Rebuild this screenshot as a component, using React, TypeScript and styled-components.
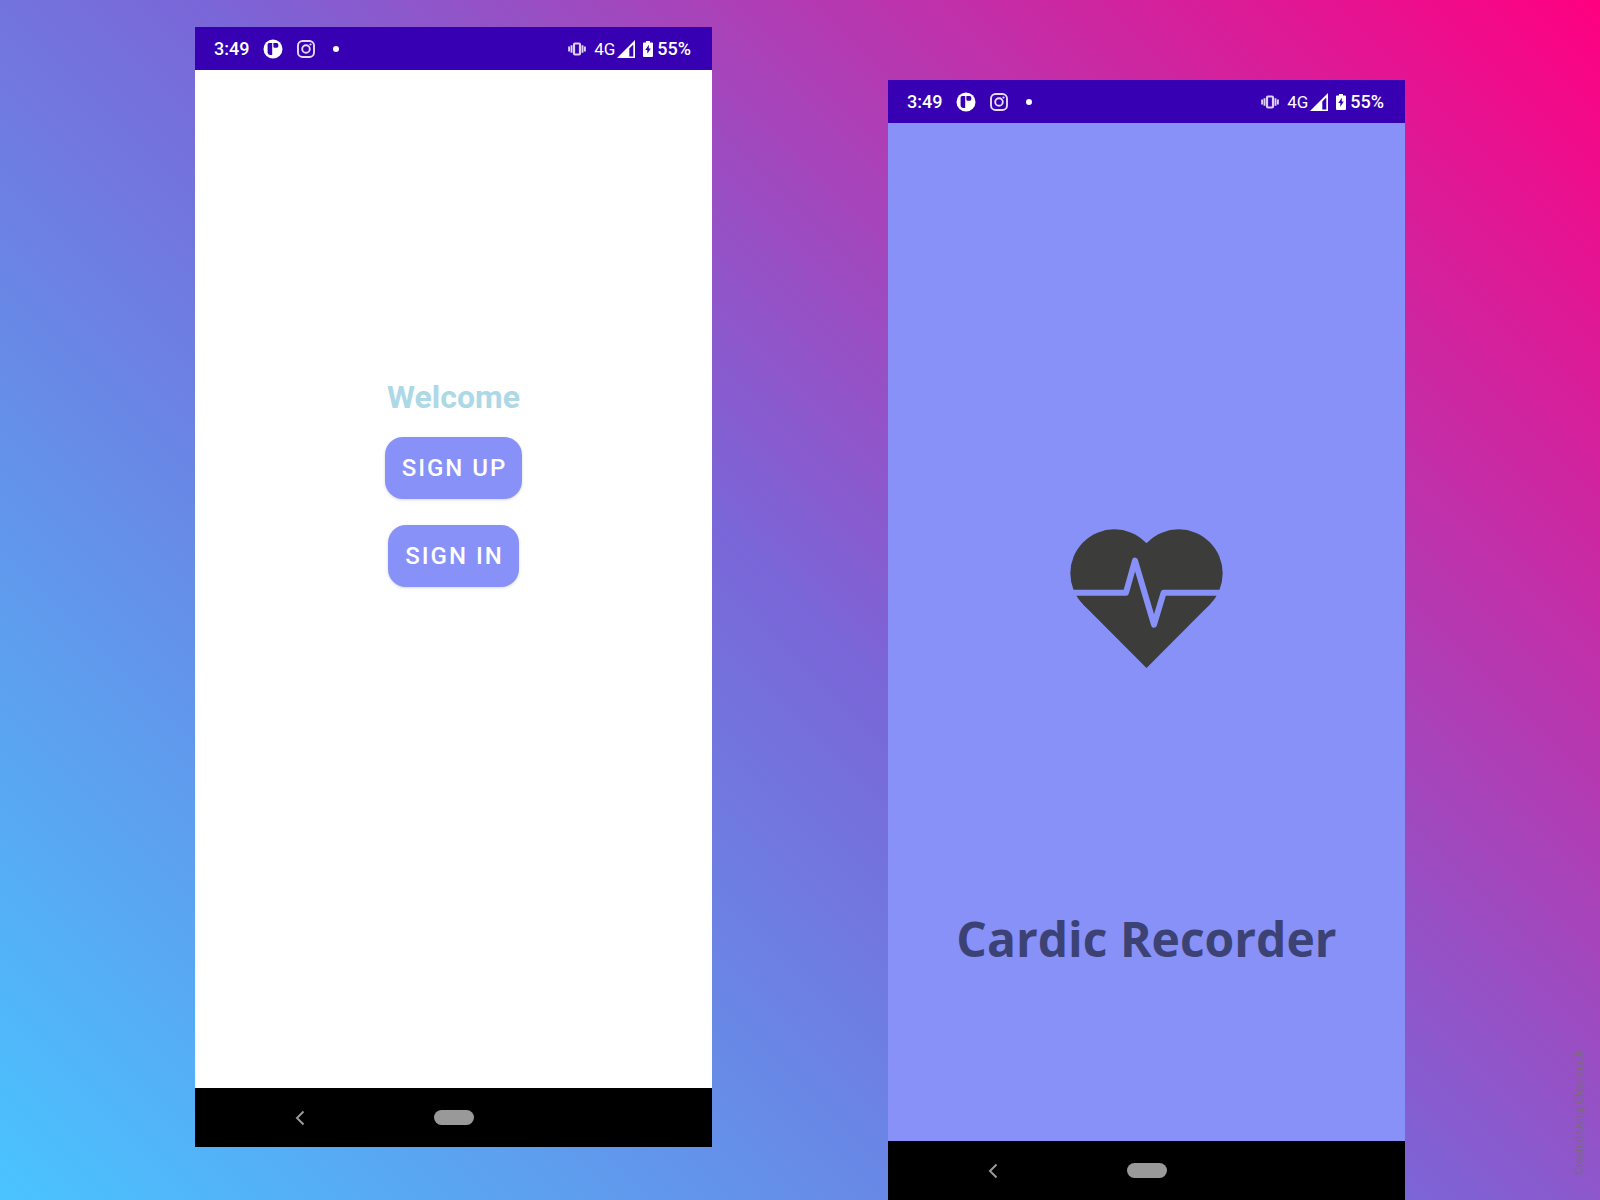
import React from "react";
import styled, { createGlobalStyle } from "styled-components";

const GlobalStyle = createGlobalStyle`
  *, *::before, *::after { box-sizing: border-box; }
  body { margin: 0; font-family: Roboto, "Liberation Sans", sans-serif; }
`;

const Page = styled.main`
  position: relative;
  display: grid;
  grid-template-columns: 1fr 1fr;
  column-gap: 176px;
  min-height: 100vh;
  padding: 0 195px;
  background: linear-gradient(45deg, #4ac4ff 0%, #7a66d8 50%, #ff0080 100%);
`;

const Phone = styled.section<{ $lowered?: boolean }>`
  display: flex;
  flex-direction: column;
  margin: ${(p) => (p.$lowered ? "80px 0 0" : "27px 0 53px")};
`;

const StatusBar = styled.header`
  display: flex;
  align-items: center;
  justify-content: space-between;
  height: 43px;
  padding: 0 21px 0 19px;
  background: #3700b3;
  color: #ffffff;
`;

const StatusGroup = styled.div<{ $gap: number }>`
  display: flex;
  align-items: center;
  gap: ${(p) => p.$gap}px;
`;

const StatusText = styled.span<{ $light?: boolean }>`
  font-size: ${(p) => (p.$light ? 17 : 18)}px;
  line-height: 24px;
  font-weight: ${(p) => (p.$light ? 400 : 500)};
`;

const Dot = styled.span`
  width: 6px;
  height: 6px;
  margin-left: 4px;
  border-radius: 50%;
  background: #ffffff;
`;

const Screen = styled.div<{ $tone: string; $top: number }>`
  flex: 1;
  display: flex;
  flex-direction: column;
  align-items: center;
  padding-top: ${(p) => p.$top}px;
  background: ${(p) => p.$tone};
`;

const Welcome = styled.h1`
  margin: 0 0 20px;
  color: #add8e6;
  font-size: 32px;
  line-height: 40px;
  font-weight: 700;
`;

const ActionButton = styled.button`
  height: 62px;
  margin-bottom: 26px;
  padding: 0 15px 0 17px;
  border: 0;
  border-radius: 18px;
  background: #8791f7;
  box-shadow: 0 1px 3px rgba(0, 0, 0, 0.16);
  color: #ffffff;
  font-family: inherit;
  font-size: 24px;
  line-height: 32px;
  font-weight: 500;
  letter-spacing: 2px;
`;

const AppTitle = styled.h1`
  margin: 238px 0 0;
  color: #3c4274;
  font-family: "Open Sans", sans-serif;
  font-size: 48px;
  line-height: 64px;
  font-weight: 700;
`;

const NavBar = styled.nav`
  display: grid;
  grid-template-columns: 1fr 40px 1fr;
  align-items: center;
  height: 59px;
  background: #000000;
`;

const BackButton = styled.button`
  display: flex;
  justify-self: center;
  margin-right: 28px;
  padding: 0;
  border: 0;
  background: none;
`;

const HomeButton = styled.button`
  height: 15px;
  padding: 0;
  border: 0;
  border-radius: 8px;
  background: #999999;
`;

const Credit = styled.small`
  position: absolute;
  right: 15px;
  bottom: 26px;
  writing-mode: vertical-rl;
  transform: rotate(180deg);
  color: #7a6c74;
  font-family: Lato, sans-serif;
  font-size: 11px;
  line-height: 12px;
`;

function ParkingIcon() {
  return (
    <svg width="20" height="20" viewBox="0 0 20 20" aria-hidden="true">
      <circle cx="10" cy="10" r="9.5" fill="#fff" />
      <path d="M4.600 5.500Q4.600 4 6 4h3.200v12H7Q4.600 15.500 4.600 13.500z" fill="#3700b3" />
      <path d="M10.400 4h3.600q1.400.6 1.400 2.200 0 2.600-2.400 2.600h-1.200q-1.400 0-1.400-1.400z" fill="#3700b3" />
    </svg>
  );
}

function CameraIcon() {
  return (
    <svg width="18" height="18" viewBox="0 0 18 18" fill="none" stroke="#e6dcf8" strokeWidth="1.9" aria-hidden="true">
      <rect x="1" y="1" width="16" height="16" rx="4.5" />
      <circle cx="9" cy="9" r="3.8" />
      <circle cx="13.5" cy="4.5" r="1.1" fill="#e6dcf8" stroke="none" />
    </svg>
  );
}

function VibrateIcon() {
  return (
    <svg width="18" height="14" viewBox="0 0 18 14" fill="none" stroke="#ddd2f5" aria-hidden="true">
      <rect x="6" y="1.5" width="6" height="11" rx="1" strokeWidth="2.2" />
      <path d="M3.500 3.200v7.600M14.500 3.200v7.600M1.100 4.600v4.800M16.900 4.600v4.800" strokeWidth="1.900" />
    </svg>
  );
}

function SignalIcon() {
  return (
    <svg width="18" height="18" viewBox="0 0 18 18" aria-hidden="true">
      <path d="M18 0v18H0zM16.300 4.400 12.300 8.400v8h4z" fill="#fff" fillRule="evenodd" />
    </svg>
  );
}

function BatteryIcon() {
  return (
    <svg width="10" height="16" viewBox="0 0 10 16" aria-hidden="true">
      <path d="M3 0h4v1.500h2q1 0 1 1V15q0 1-1 1H1q-1 0-1-1V2.500q0-1 1-1h2z" fill="#fff" />
      <path d="M5.800 3.800 2.300 9h2v3.800L7.800 7.600h-2z" fill="#3700b3" />
    </svg>
  );
}

function HeartPulse() {
  return (
    <svg width="155" height="141" viewBox="58 52 465 423" role="img" aria-label="Heart with pulse line">
      <g fill="#3c3c3a">
        <circle cx="194" cy="188" r="132" />
        <circle cx="387" cy="188" r="132" />
        <path d="M290.500 97 480.300 281.300 290.500 472 100.700 281.300z" />
      </g>
      <path
        d="M50 246H229L256 150 313 342 342 246H530"
        fill="none"
        stroke="#8791f7"
        strokeWidth="18"
        strokeLinejoin="round"
      />
    </svg>
  );
}

function Status() {
  return (
    <StatusBar>
      <StatusGroup $gap={14}>
        <StatusText>3:49</StatusText>
        <ParkingIcon />
        <CameraIcon />
        <Dot />
      </StatusGroup>
      <StatusGroup $gap={8}>
        <VibrateIcon />
        <StatusGroup $gap={2}>
          <StatusText $light>4G</StatusText>
          <SignalIcon />
        </StatusGroup>
        <StatusGroup $gap={4}>
          <BatteryIcon />
          <StatusText>55%</StatusText>
        </StatusGroup>
      </StatusGroup>
    </StatusBar>
  );
}

function Navigation() {
  return (
    <NavBar>
      <BackButton aria-label="Back">
        <svg width="10" height="16" viewBox="0 0 10 16" fill="none" stroke="#999" strokeWidth="2" aria-hidden="true">
          <path d="M8.500 1.500 2 8l6.500 6.500" />
        </svg>
      </BackButton>
      <HomeButton aria-label="Home" />
    </NavBar>
  );
}

export default function App() {
  return (
    <>
      <GlobalStyle />
      <Page>
        <Phone>
          <Status />
          <Screen $tone="#ffffff" $top={307}>
            <Welcome>Welcome</Welcome>
            <ActionButton>SIGN UP</ActionButton>
            <ActionButton>SIGN IN</ActionButton>
          </Screen>
          <Navigation />
        </Phone>
        <Phone $lowered>
          <Status />
          <Screen $tone="#8791f7" $top={405}>
            <HeartPulse />
            <AppTitle>Cardic Recorder</AppTitle>
          </Screen>
          <Navigation />
        </Phone>
        <Credit>Created Using Cleanmock</Credit>
      </Page>
    </>
  );
}
